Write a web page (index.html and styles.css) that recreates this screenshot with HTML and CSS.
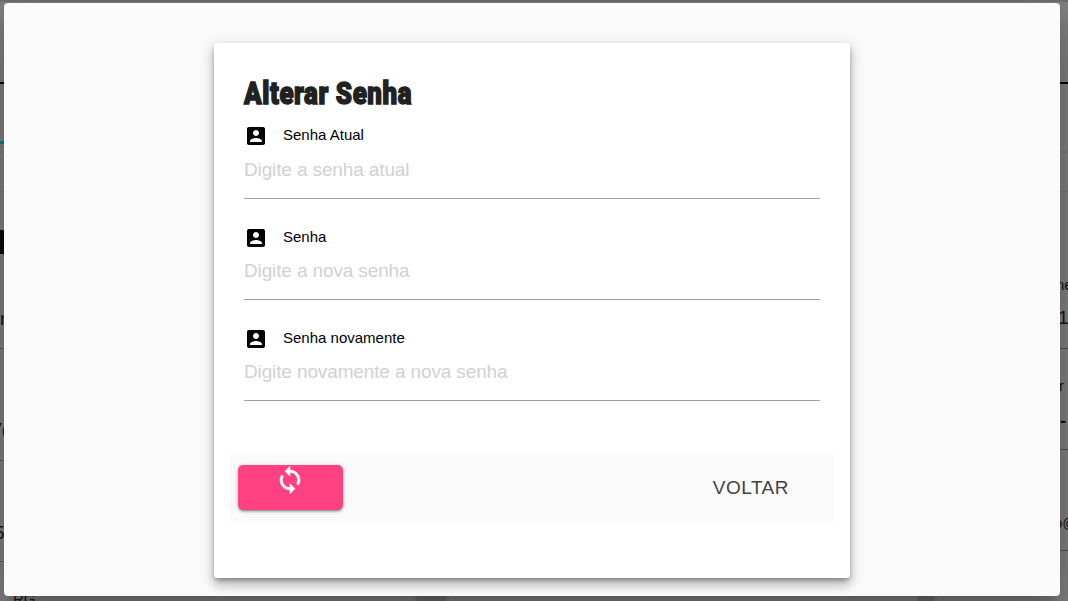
FILE: index.html
```
<!DOCTYPE html>
<html lang="pt-BR">
<head>
<meta charset="utf-8">
<title>Alterar Senha</title>
<link rel="stylesheet" href="styles.css">
</head>
<body>
<div class="backdrop">
  <i class="band band-top"></i>
  <i class="rule rule-header"></i>
  <i class="rule rule-accent"></i>
  <i class="edge edge-a"></i>
  <i class="edge edge-b"></i>
  <i class="blob"></i>
  <span class="under u-r">r</span>
  <span class="under u-vo">V(</span>
  <span class="under u-5">5</span>
  <span class="under u-rg">RG</span>
  <i class="dots d1"></i><i class="dots d2"></i><i class="dots d3"></i>
  <span class="under u-ne">ne</span>
  <span class="under u-1">1</span>
  <span class="under u-er">r</span>
  <span class="under u-dash">-</span>
  <span class="under u-at">o@</span>
  <i class="line l1"></i><i class="line l2"></i><i class="line l3"></i>
  <i class="gap g1"></i><i class="gap g2"></i>
</div>
<main class="dialog">
  <form class="card">
    <h1 class="title"><span class="title-text">Alterar Senha</span></h1>
    <div class="field">
      <label class="label" for="atual"><svg class="icon" viewBox="0 0 24 24"><path d="M3 5v14c0 1.1.89 2 2 2h14c1.1 0 2-.9 2-2V5c0-1.1-.9-2-2-2H5c-1.11 0-2 .9-2 2zm12 4c0 1.66-1.34 3-3 3s-3-1.34-3-3 1.34-3 3-3 3 1.34 3 3zm-9 8c0-2 4-3.1 6-3.1s6 1.1 6 3.1v1H6v-1z"/></svg>Senha Atual</label>
      <input class="input" id="atual" type="text" placeholder="Digite a senha atual">
    </div>
    <div class="field field-next">
      <label class="label" for="nova"><svg class="icon" viewBox="0 0 24 24"><path d="M3 5v14c0 1.1.89 2 2 2h14c1.1 0 2-.9 2-2V5c0-1.1-.9-2-2-2H5c-1.11 0-2 .9-2 2zm12 4c0 1.66-1.34 3-3 3s-3-1.34-3-3 1.34-3 3-3 3 1.34 3 3zm-9 8c0-2 4-3.1 6-3.1s6 1.1 6 3.1v1H6v-1z"/></svg>Senha</label>
      <input class="input" id="nova" type="text" placeholder="Digite a nova senha">
    </div>
    <div class="field field-next">
      <label class="label" for="novamente"><svg class="icon" viewBox="0 0 24 24"><path d="M3 5v14c0 1.1.89 2 2 2h14c1.1 0 2-.9 2-2V5c0-1.1-.9-2-2-2H5c-1.11 0-2 .9-2 2zm12 4c0 1.66-1.34 3-3 3s-3-1.34-3-3 1.34-3 3-3 3 1.34 3 3zm-9 8c0-2 4-3.1 6-3.1s6 1.1 6 3.1v1H6v-1z"/></svg>Senha novamente</label>
      <input class="input" id="novamente" type="text" placeholder="Digite novamente a nova senha">
    </div>
    <div class="actions">
      <button class="submit" type="button" aria-label="Alterar"><svg class="sync" viewBox="0 0 24 24"><path d="M12 4V1L8 5l4 4V6c3.31 0 6 2.69 6 6 0 1.01-.25 1.97-.7 2.8l1.46 1.46C19.54 15.03 20 13.57 20 12c0-4.42-3.58-8-8-8zm0 14c-3.31 0-6-2.69-6-6 0-1.01.25-1.97.7-2.8L5.24 7.74C4.46 8.97 4 10.43 4 12c0 4.42 3.58 8 8 8v3l4-4-4-4v3z"/></svg></button>
      <button class="back" type="button">VOLTAR</button>
    </div>
  </form>
</main>
</body>
</html>
```
FILE: styles.css
```
* { box-sizing: border-box; }
body {
  margin: 0;
  width: 1068px;
  height: 601px;
  overflow: hidden;
  padding: 3px 8px 5px 4px;
  background: #828282;
  font-family: "Liberation Sans", Arial, sans-serif;
}
.backdrop {
  position: absolute;
  inset: 0;
  overflow: hidden;
}
.backdrop i { position: absolute; }
.band-top { left: 0; right: 0; top: 0; height: 2px; background: #707070; }
.rule { left: 0; height: 2px; }
.rule-header { top: 82px; width: 100%; background: #000; }
.rule-accent { top: 141px; width: 5px; height: 3px; background: #087d8c; }
.edge { left: 0; right: 0; height: 3px; background: linear-gradient(transparent, #787878); }
.edge-a { top: 150px; }
.edge-b { top: 189px; }
.blob { left: -8px; top: 230px; width: 14px; height: 24px; background: #0c0b07; border-radius: 4px 4px 0 0; }
.dots { left: 0; width: 4px; height: 1px; background: repeating-linear-gradient(90deg, #444 0 1px, transparent 1px 2px); }
.d1 { top: 348px; }
.d2 { top: 460px; }
.d3 { top: 561px; }
.line { right: 0; width: 8px; height: 1px; background: #505050; }
.l1 { top: 348px; }
.l2 { top: 449px; }
.l3 { top: 550px; }
.gap { top: 594px; height: 7px; background: #6e6e6e; box-shadow: 0 0 4px #555; }
.g1 { left: 417px; width: 28px; }
.g2 { left: 919px; width: 14px; }
.under { position: absolute; color: #161616; font-size: 19px; line-height: 22px; white-space: nowrap; }
.u-r { left: 0; top: 308px; }
.u-vo { left: -11px; top: 419px; }
.u-5 { left: -6px; top: 522px; }
.u-rg { left: 13px; top: 588px; font-size: 15px; }
.u-ne { left: 1056px; top: 274px; font-size: 15px; }
.u-1 { left: 1058px; top: 307px; }
.u-er { left: 1059px; top: 375px; font-size: 15px; }
.u-dash { left: 1060px; top: 410px; font-weight: bold; }
.u-at { left: 1054px; top: 512px; font-size: 15px; }
.dialog {
  position: relative;
  width: 1056px;
  height: 593px;
  padding: 40px 210px;
  background: #fafafa;
  border-radius: 4px;
  box-shadow: 0 11px 15px -7px rgba(0,0,0,.2), 0 24px 38px 3px rgba(0,0,0,.14), 0 9px 46px 8px rgba(0,0,0,.12);
}
.card {
  width: 636px;
  height: 535px;
  padding: 33px 16px 0;
  background: #fff;
  border-radius: 3px;
  box-shadow: 0 5px 5px -3px rgba(0,0,0,.2), 0 8px 10px 1px rgba(0,0,0,.14), 0 3px 14px 2px rgba(0,0,0,.12), 0 2px 4px rgba(0,0,0,.18);
}
.title {
  height: 46px;
  margin: 0 14px;
  color: #212121;
  font: 900 32px/35px Roboto, sans-serif;
}
.title-text {
  display: inline-block;
  transform: scaleX(.81);
  transform-origin: left;
  letter-spacing: .7px;
  white-space: nowrap;
  -webkit-text-stroke: 1.5px #212121;
}
.field { height: 101px; margin: 0 14px; }
.label {
  display: flex;
  gap: 15px;
  height: 27px;
  font-size: 15px;
  line-height: 26px;
  color: #000;
}
.field-next .label { height: 26px; }
.field-next { padding-top: 1px; }
.icon { width: 24px; height: 24px; margin-top: 2px; }
.input {
  display: block;
  width: 576px;
  height: 50px;
  padding: 0 0 8px;
  border: 0;
  border-bottom: 1px solid #9e9e9e;
  border-radius: 0;
  background: transparent;
  font: 19px "Liberation Sans", Arial, sans-serif;
  letter-spacing: -.13px;
}
.input::placeholder { color: #d1d1d1; opacity: 1; }
.actions {
  display: flex;
  justify-content: space-between;
  align-items: flex-start;
  width: 604px;
  height: 70px;
  margin-top: 28px;
  padding: 12px 45px 0 8px;
  background: #fafafa;
  border-radius: 2px;
}
.submit {
  display: flex;
  justify-content: center;
  width: 105px;
  height: 45px;
  padding: 0 1px 0 0;
  border: 0;
  border-radius: 5px;
  background: #ff4081;
  box-shadow: 0 2px 2px rgba(0,0,0,.14), 0 3px 1px -2px rgba(0,0,0,.2), 0 1px 5px rgba(0,0,0,.2);
}
.sync { width: 30px; height: 30px; fill: #fff; stroke: #fff; stroke-width: .4; }
.back {
  padding: 0;
  border: 0;
  background: transparent;
  color: #424242;
  font: 19px/45px "Liberation Sans", Arial, sans-serif;
  letter-spacing: .5px;
}
```
